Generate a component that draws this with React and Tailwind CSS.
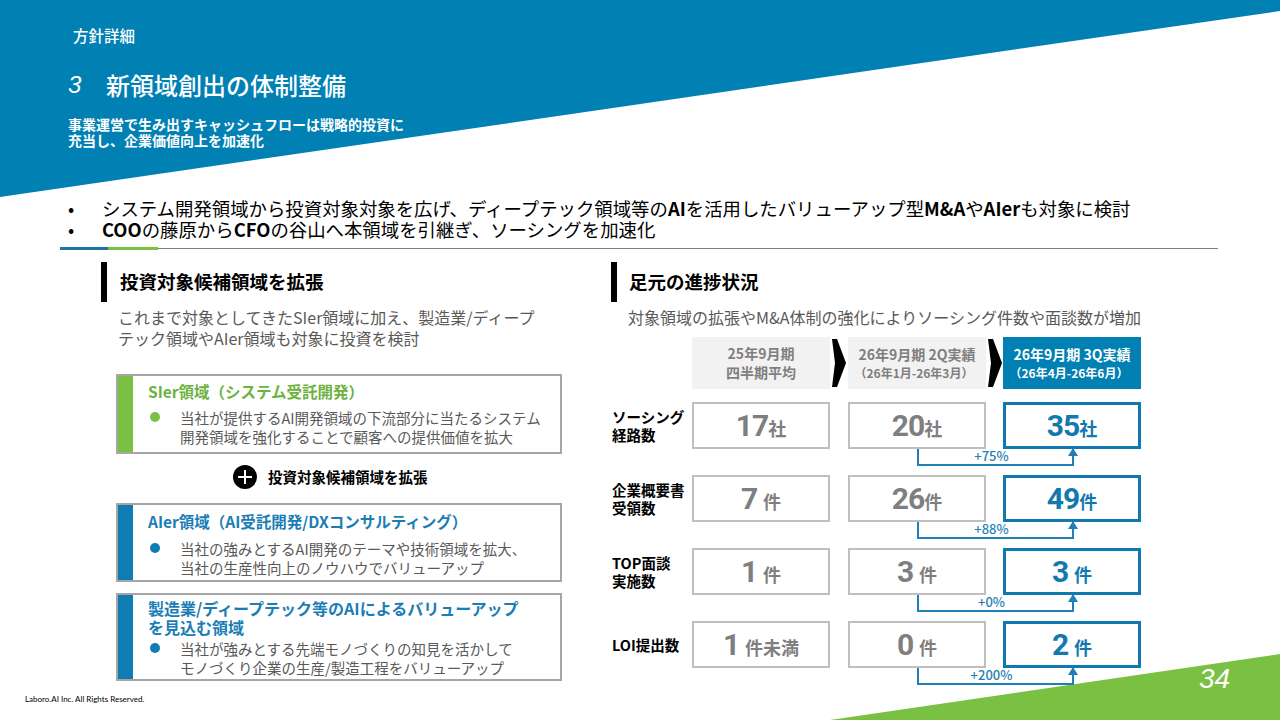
import React from "react";

function Chevron() {
  return (
    <svg width="14" height="48" viewBox="0 0 14 48">
      <polygon points="0,0 5,0 14,24 5,48 0,48 3,24" fill="#000" />
    </svg>
  );
}

function HeadCell({ l1, l2, hl, small }) {
  return (
    <div
      className={
        hl
          ? "w-[138px] bg-[#0080b3] text-white flex flex-col items-center justify-center"
          : "w-[138px] bg-[#f2f2f2] text-[#7f7f7f] flex flex-col items-center justify-center"
      }
    >
      <div className="text-[14px] leading-[19px] font-bold">{l1}</div>
      {small ? (
        <div className="text-[12px] leading-[17px] font-semibold pr-[6px]">{l2}</div>
      ) : (
        <div className="text-[14px] leading-[19px] font-bold">{l2}</div>
      )}
    </div>
  );
}

function Val({ num, unit, hl, sp }) {
  return (
    <div
      className={
        hl
          ? "w-[138px] h-[47px] border-[3px] border-[#1279b0] text-[#1279b0] flex items-center justify-center bg-white"
          : "w-[138px] h-[47px] border-2 border-[#bfbfbf] text-[#7f7f7f] flex items-center justify-center bg-white"
      }
    >
      <div className="flex items-baseline">
        <span className="font-['Roboto',sans-serif] font-bold text-[30px] leading-none tracking-[-1px]">{num}</span>
        <span className={sp ? "ml-[6px] font-bold text-[18px] leading-none" : "font-bold text-[18px] leading-none"}>{unit}</span>
      </div>
    </div>
  );
}

function Conn({ label }) {
  return (
    <div className="flex h-[26px]">
      <div className="w-[305px] shrink-0" />
      <div className="relative w-[157px] h-[17px] border-x-2 border-b-2 border-[#1f7fb6] flex justify-center">
        <span className="text-[13px] leading-[14px] text-[#1f7fb6] font-medium pr-[8px]">{label}</span>
        <svg className="absolute -right-[6px] -top-[1px]" width="10" height="8" viewBox="0 0 10 8">
          <polygon points="5,0 10,8 0,8" fill="#1f7fb6" />
        </svg>
      </div>
    </div>
  );
}

function Row({ label, vals }) {
  return (
    <div className="flex h-[47px]">
      <div className="w-[80px] flex items-center text-[14.5px] leading-[18px] font-bold text-black">{label}</div>
      <Val {...vals[0]} />
      <div className="w-[18px]" />
      <Val {...vals[1]} />
      <div className="w-[17px]" />
      <Val {...vals[2]} hl />
    </div>
  );
}

function Bullet({ color, children }) {
  return (
    <div className="flex text-[14.5px] leading-[19px] text-[#595959]">
      <span className="w-[32px] shrink-0 pt-[4px] pl-[2px]">
        <span className={"block w-[10px] h-[10px] rounded-full " + color} />
      </span>
      <span>{children}</span>
    </div>
  );
}

export default function App() {
  return (
    <div className="relative w-[1280px] h-[720px] overflow-hidden bg-white font-['Noto_Sans_CJK_JP',sans-serif] text-black">
      <svg className="absolute left-0 top-0" width="1280" height="720" viewBox="0 0 1280 720">
        <polygon points="0,0 1280,0 1280,11 0,197" fill="#0080b3" />
        <polygon points="830,720 1280,654 1280,720" fill="#7ac143" />
      </svg>

      <div className="relative flex flex-col">
        <div className="pl-[73px] pt-[25px] h-[45px] text-white text-[15.5px] leading-[20px] font-medium">方針詳細</div>
        <div className="pl-[68px] mt-[24px] flex items-center h-[32px] text-white">
          <span className="italic text-[24px] font-['Liberation_Sans',sans-serif] w-[38px]">3</span>
          <span className="text-[24px] font-medium">新領域創出の体制整備</span>
        </div>
        <div className="pl-[68px] mt-[15px] text-white text-[14px] leading-[16px] font-bold">
          事業運営で生み出すキャッシュフローは戦略的投資に
          <br />
          充当し、企業価値向上を加速化
        </div>

        <div className="mt-[50px] pl-[68px] text-[18.4px] leading-[21px] text-black">
          <div className="flex">
            <span className="w-[34px] shrink-0">•</span>
            <span>
              システム開発領域から投資対象対象を広げ、ディープテック領域等の<b>AI</b>を活用したバリューアップ型<b>M&amp;A</b>や<b>AIer</b>も対象に検討
            </span>
          </div>
          <div className="flex">
            <span className="w-[34px] shrink-0">•</span>
            <span>
              <b>COO</b>の藤原から<b>CFO</b>の谷山へ本領域を引継ぎ、ソーシングを加速化
            </span>
          </div>
        </div>

        <div className="mt-[7px] ml-[60px] w-[1158px] h-[3px] flex items-center">
          <div className="w-[48px] h-[3px] bg-[#1c75a8]" />
          <div className="w-[50px] h-[3px] bg-[#7ac143]" />
          <div className="flex-1 h-[1px] bg-[#7f7f7f]" />
        </div>

        <div className="mt-[12px] h-[432px] flex">
          {/* left column */}
          <div className="ml-[101px] w-[510px] flex flex-col">
            <div className="h-[40px] border-l-[6px] border-black pl-[13px] flex items-center text-[18.5px] font-bold">
              投資対象候補領域を拡張
            </div>
            <p className="mt-[5px] pl-[17px] text-[16px] leading-[21px] text-[#595959]">
              これまで対象としてきたSIer領域に加え、製造業/ディープ
              <br />
              テック領域やAIer領域も対象に投資を検討
            </p>

            <div className="ml-[15px] mt-[25px] w-[446px] h-[80px] border-2 border-[#a6a6a6] flex">
              <div className="w-[15px] bg-[#7ac143]" />
              <div className="pl-[15px] pt-[5px]">
                <div className="text-[15.5px] leading-[20px] font-bold text-[#6cb33f]">SIer領域（システム受託開発）</div>
                <div className="mt-[7px]">
                  <Bullet color="bg-[#7ac143]">
                    当社が提供するAI開発領域の下流部分に当たるシステム
                    <br />
                    開発領域を強化することで顧客への提供価値を拡大
                  </Bullet>
                </div>
              </div>
            </div>

            <div className="mt-[11px] h-[24px] flex items-center pl-[132px]">
              <div className="w-[24px] h-[24px] rounded-full bg-black flex items-center justify-center">
                <svg width="14" height="14" viewBox="0 0 14 14">
                  <rect x="6" y="0" width="2" height="14" fill="#fff" />
                  <rect x="0" y="6" width="14" height="2" fill="#fff" />
                </svg>
              </div>
              <span className="ml-[11px] text-[14.5px] font-bold">投資対象候補領域を拡張</span>
            </div>

            <div className="ml-[15px] mt-[14px] w-[446px] h-[79px] border-2 border-[#a6a6a6] flex">
              <div className="w-[15px] bg-[#0f7cb3]" />
              <div className="pl-[15px] pt-[6px]">
                <div className="text-[15.5px] leading-[20px] font-bold text-[#1a7db5]">AIer領域（AI受託開発/DXコンサルティング）</div>
                <div className="mt-[8px]">
                  <Bullet color="bg-[#0f7cb3]">
                    当社の強みとするAI開発のテーマや技術領域を拡大、
                    <br />
                    当社の生産性向上のノウハウでバリューアップ
                  </Bullet>
                </div>
              </div>
            </div>

            <div className="ml-[15px] mt-[11px] w-[446px] h-[88px] border-2 border-[#a6a6a6] flex">
              <div className="w-[15px] bg-[#0f7cb3]" />
              <div className="pl-[15px] pt-[4px]">
                <div className="text-[16px] leading-[19px] font-bold text-[#1a7db5]">
                  製造業/ディープテック等のAIによるバリューアップ
                  <br />
                  を見込む領域
                </div>
                <div className="mt-[2px]">
                  <Bullet color="bg-[#0f7cb3]">
                    当社が強みとする先端モノづくりの知見を活かして
                    <br />
                    モノづくり企業の生産/製造工程をバリューアップ
                  </Bullet>
                </div>
              </div>
            </div>
          </div>

          {/* right column */}
          <div className="w-[600px] flex flex-col">
            <div className="h-[40px] border-l-[6px] border-black pl-[12px] flex items-center text-[18.5px] font-bold">
              足元の進捗状況
            </div>
            <p className="mt-[5px] pl-[17px] text-[16px] leading-[21px] text-[#595959]">
              対象領域の拡張やM&amp;A体制の強化によりソーシング件数や面談数が増加
            </p>

            <div className="mt-[9px] ml-[1px] flex flex-col">
              <div className="flex h-[52px]">
                <div className="w-[80px]" />
                <HeadCell l1="25年9月期" l2="四半期平均" />
                <div className="w-[18px] flex items-center justify-center">
                  <Chevron />
                </div>
                <HeadCell l1="26年9月期 2Q実績" l2="（26年1月-26年3月）" small />
                <div className="w-[17px] flex items-center justify-center">
                  <Chevron />
                </div>
                <HeadCell l1="26年9月期 3Q実績" l2="（26年4月-26年6月）" small hl />
              </div>

              <div className="mt-[13px]">
                <Row
                  label={<span>ソーシング<br />経路数</span>}
                  vals={[
                    { num: "17", unit: "社" },
                    { num: "20", unit: "社" },
                    { num: "35", unit: "社" },
                  ]}
                />
                <Conn label="+75%" />
                <Row
                  label={<span>企業概要書<br />受領数</span>}
                  vals={[
                    { num: "7", unit: "件", sp: true },
                    { num: "26", unit: "件" },
                    { num: "49", unit: "件" },
                  ]}
                />
                <Conn label="+88%" />
                <Row
                  label={<span>TOP面談<br />実施数</span>}
                  vals={[
                    { num: "1", unit: "件", sp: true },
                    { num: "3", unit: "件", sp: true },
                    { num: "3", unit: "件", sp: true },
                  ]}
                />
                <Conn label="+0%" />
                <Row
                  label={<span>LOI提出数</span>}
                  vals={[
                    { num: "1", unit: "件未満", sp: true },
                    { num: "0", unit: "件", sp: true },
                    { num: "2", unit: "件", sp: true },
                  ]}
                />
                <Conn label="+200%" />
              </div>
            </div>
          </div>
        </div>

        <div className="pl-[25px] text-[8px] leading-[10px] font-['Lato',sans-serif] text-black">
          Laboro.AI Inc. All Rights Reserved.
        </div>
      </div>

      <div className="absolute left-[1199px] top-[663px] text-white italic text-[28px] leading-[32px] font-['Liberation_Sans',sans-serif]">
        34
      </div>
    </div>
  );
}
